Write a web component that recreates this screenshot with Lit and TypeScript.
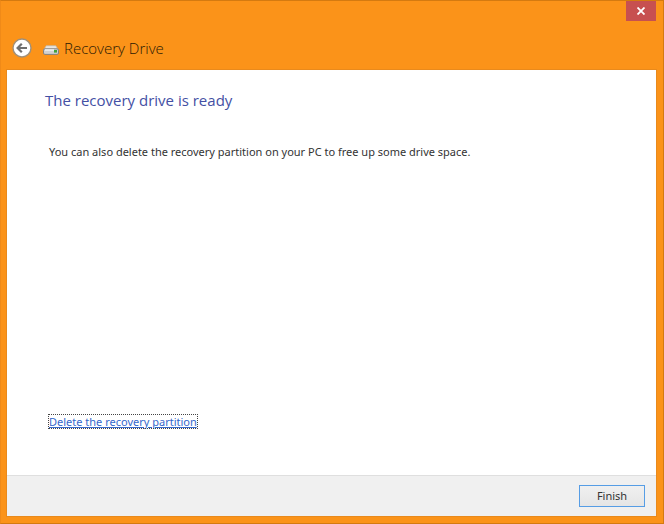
import { LitElement, html, css } from "lit";
import { customElement } from "lit/decorators.js";

@customElement("app-root")
export class AppRoot extends LitElement {
  static styles = css`
    :host {
      display: block;
      font-family: "Noto Sans", "Open Sans", sans-serif;
      font-size: 11px;
      line-height: 16px;
      color: #333;
    }
    * {
      box-sizing: border-box;
    }
    .window {
      display: flex;
      flex-direction: column;
      min-height: 100vh;
      padding: 0 7px 7px 6px;
      background: #fb9319;
      border: 1px solid #d47a10;
      border-left-color: #f08a18;
    }
    .titlebar {
      display: flex;
      justify-content: flex-end;
      height: 20px;
    }
    .close {
      display: flex;
      align-items: center;
      justify-content: center;
      width: 30px;
      height: 20px;
      padding: 0;
      border: 0;
      background: #c75050;
    }
    .header {
      display: flex;
      align-items: center;
      height: 49px;
      padding: 5px 5px 0;
    }
    .back {
      display: flex;
      width: 20px;
      height: 20px;
      padding: 0;
      border: 0;
      background: none;
    }
    .drive {
      margin: 4px 5px 0 11px;
    }
    .title,
    h2 {
      margin: 0;
      font-family: "Open Sans", "Noto Sans", sans-serif;
      font-size: 15px;
      line-height: 20px;
      font-weight: 400;
    }
    .title {
      font-weight: 300;
      color: #2c1a04;
    }
    .panel {
      display: flex;
      flex-direction: column;
      flex: 1;
      background: #fff;
      outline: 1px solid #e98a1c;
    }
    .content {
      display: flex;
      flex-direction: column;
      align-items: flex-start;
      flex: 1;
      padding: 20px 38px 47px;
    }
    h2 {
      color: #4450a4;
    }
    p {
      margin: 34px 4px 0;
    }
    a {
      margin: auto 4px 0;
      color: #3568cc;
      line-height: 13px;
      outline: 1px dotted #444;
    }
    .footer {
      display: flex;
      align-items: center;
      justify-content: flex-end;
      height: 41px;
      padding-right: 11px;
      border-top: 1px solid #dfdfdf;
      background: #f0f0f0;
    }
    .finish {
      width: 66px;
      height: 22px;
      padding: 0;
      border: 1px solid #569de5;
      background: linear-gradient(#f0f0f0, #e5e5e5);
      font: inherit;
      color: #333;
    }
  `;

  render() {
    return html`
      <main class="window">
        <div class="titlebar">
          <button class="close" aria-label="Close">
            <svg width="8" height="8" viewBox="0 0 8 8">
              <path d="M.5 .5 7.5 7.5M7.5 .5 .5 7.5" stroke="#fff" stroke-width="1.8" />
            </svg>
          </button>
        </div>
        <header class="header">
          <button class="back" aria-label="Back">
            <svg width="20" height="20" viewBox="0 0 20 20">
              <circle cx="10" cy="10" r="9" fill="#fff" stroke="#a08f78" stroke-width="1.4" />
              <path
                d="M15 10H6M9.8 5.8 5.6 10l4.2 4.2"
                fill="none"
                stroke="#707070"
                stroke-width="2.2"
              />
            </svg>
          </button>
          <svg class="drive" width="16" height="10" viewBox="0 0 16 10">
            <path d="M3.2 .7h9.6L15.4 5H.6z" fill="#e8e4e0" stroke="#c3b5a5" stroke-width=".8" />
            <rect x=".5" y="3.8" width="15" height="5.6" rx="1.4" fill="#d0d0d0" stroke="#85807c" />
            <path d="M2 5h9" stroke="#f4f4f4" stroke-width="1.4" />
            <rect x="11" y="5" width="3" height="2.6" fill="#42a33b" />
          </svg>
          <h1 class="title">Recovery Drive</h1>
        </header>
        <section class="panel">
          <div class="content">
            <h2>The recovery drive is ready</h2>
            <p>You can also delete the recovery partition on your PC to free up some drive space.</p>
            <a href="#">Delete the recovery partition</a>
          </div>
          <footer class="footer">
            <button class="finish">Finish</button>
          </footer>
        </section>
      </main>
    `;
  }
}
